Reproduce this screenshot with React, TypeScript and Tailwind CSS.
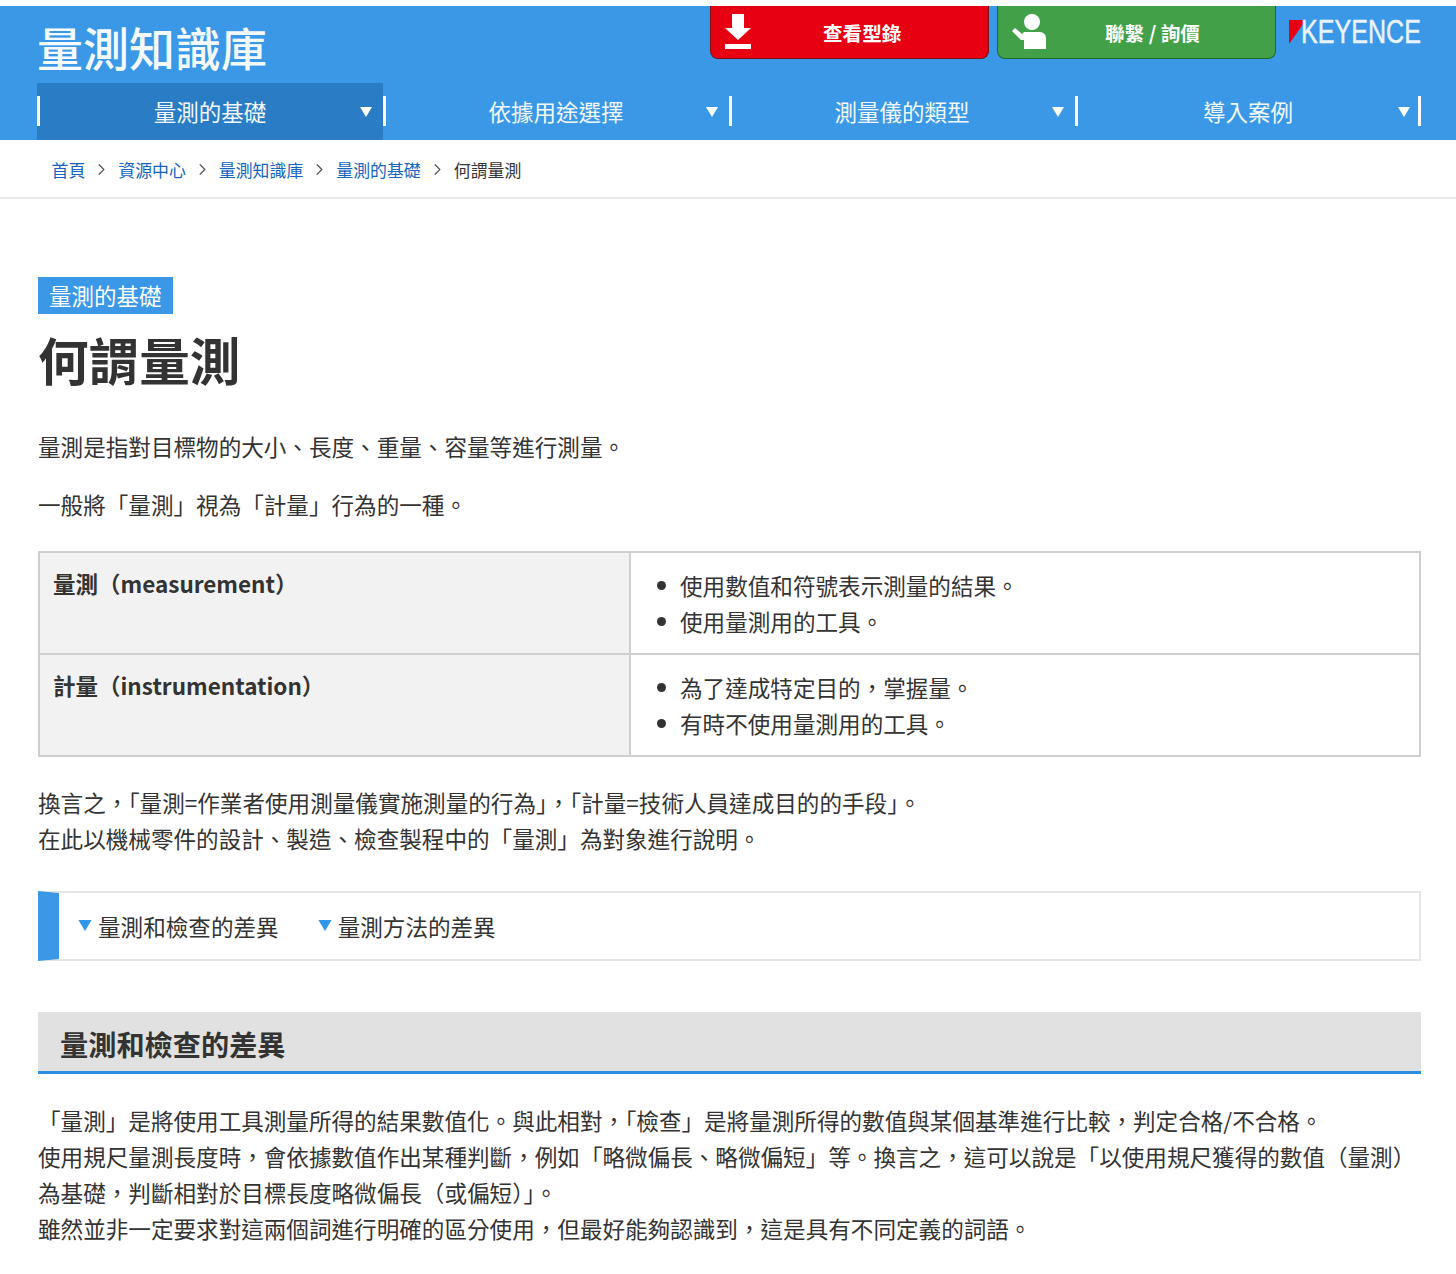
import { ChevronRight } from "lucide-react";

const cjk = "font-['Noto_Sans_CJK_TC','Noto_Sans_CJK_SC',sans-serif]";

const navItems = ["量測的基礎", "依據用途選擇", "測量儀的類型", "導入案例"];
const crumbs = ["首頁", "資源中心", "量測知識庫", "量測的基礎"];

const Tri = ({ className }: { className: string }) => (
  <svg viewBox="0 0 12 10" className={className} fill="currentColor">
    <path d="M0 0h12L6 10z" />
  </svg>
);

const TableRow = ({ title, items, last }: { title: string; items: string[]; last?: boolean }) => (
  <div className={`flex ${last ? "h-[100px]" : "h-[102px] border-b-2 border-[#cfcfcf]"}`}>
    <div className="w-[591px] shrink-0 border-r-2 border-[#cfcfcf] bg-[#f2f2f2] pl-[13px] pt-[12px] text-[22.5px] leading-[36px] font-bold text-[#333]">
      {title}
    </div>
    <ul className="pl-[26px] pt-[14.5px]">
      {items.map((item) => (
        <li key={item} className="flex h-[36px] items-center text-[22.58px] leading-[36px]">
          <span className="mr-[14px] h-[9px] w-[9px] rounded-full bg-[#333]" />
          {item}
        </li>
      ))}
    </ul>
  </div>
);

export default function App() {
  return (
    <div className={`min-h-[1274px] bg-white text-[#333] ${cjk}`}>
      <div className="h-[6px] bg-white" />
      <header className="h-[134px] bg-[#3a98e6] pl-[37px] pr-[35px]">
        <div className="flex h-[77px] items-start">
          <div className="mt-[13px] text-[46px] leading-[54px] font-medium text-[#f4f9fd]">量測知識庫</div>
          <div className="ml-auto flex items-start">
            <a className="flex h-[53px] w-[279px] items-center rounded-b-lg border border-t-0 border-[#7a0f16] bg-[#e60012] pl-[13px] text-white">
              <svg viewBox="0 0 28 36" className="h-[36px] w-[28px]" fill="white">
                <path d="M8 0h12v14h7L14 26 1 14h7z" />
                <rect x="1" y="30" width="26" height="5" />
              </svg>
              <span className="ml-[71px] pt-[1px] text-[19.6px] font-bold">查看型錄</span>
            </a>
            <a className="ml-[8px] flex h-[53px] w-[279px] items-center rounded-b-lg border border-t-0 border-[#1f6b28] bg-[#42a048] pl-[12px] text-white">
              <svg viewBox="0 0 36 36" className="h-[36px] w-[36px]" fill="white">
                <circle cx="22" cy="8" r="8" />
                <path d="M14 18h16a6 6 0 0 1 6 6v11H14v-9h-3L2 17l3-3 7 6z" />
              </svg>
              <span className="ml-[59px] pt-[1px] text-[19.6px] font-bold">聯繫 / 詢價</span>
            </a>
            <div className="ml-[13px] mt-[14px] flex w-[132px] items-center">
              <svg viewBox="0 0 17 24" className="h-[24px] w-[17px] shrink-0">
                <path d="M0 0h17L0 24z" fill="#e60012" />
              </svg>
              <span className="ml-[-5px] origin-left scale-x-[0.76] font-['Liberation_Sans',sans-serif] text-[33px] leading-[24px] whitespace-nowrap text-[#e8f3fc] [-webkit-text-stroke:0.5px_#e8f3fc]">
                KEYENCE
              </span>
            </div>
          </div>
        </div>
        <nav className="flex h-[57px]">
          {navItems.map((item, i) => (
            <div
              key={item}
              className={`relative grid w-[346.3px] grid-cols-[1fr_auto_1fr] items-center ${i === 0 ? "bg-[#2a7cc5]" : ""}`}
            >
              <span className="absolute left-0 top-[13px] h-[30px] w-[3px] bg-white" />
              <span />
              <span className="text-[22.5px] leading-[57px] text-[#f2f8fd]">{item}</span>
              <Tri className="mr-[11px] h-[10px] w-[12px] justify-self-end text-white" />
              {i === navItems.length - 1 && <span className="absolute right-0 top-[13px] h-[30px] w-[3px] bg-white" />}
            </div>
          ))}
        </nav>
      </header>

      <div className="flex h-[59px] items-center border-b-2 border-[#e6e6e6] pl-[51.5px] pt-[2px] text-[16.9px]">
        {crumbs.map((c) => (
          <span key={c} className="flex items-center">
            <a className="text-[#1565c0]">{c}</a>
            <ChevronRight className="mx-[7px] h-[19px] w-[19px] text-[#555]" strokeWidth={1.5} />
          </span>
        ))}
        <span className="text-[#333]">何謂量測</span>
      </div>

      <main className="pl-[38px] pr-[35px] pt-[78px]">
        <div className="inline-block h-[37px] bg-[#3a98e6] px-[11px] text-[22.5px] leading-[37px] text-white">量測的基礎</div>
        <h1 className="mt-[5px] text-[50.6px] leading-[80px] font-bold text-[#333]">何謂量測</h1>
        <p className="mt-[30px] text-[22.58px] leading-[36px]">量測是指對目標物的大小、長度、重量、容量等進行測量。</p>
        <p className="mt-[22px] text-[22.58px] leading-[36px]">一般將「量測」視為「計量」行為的一種。</p>

        <div className="mt-[28px] border-2 border-[#cfcfcf]">
          <TableRow title="量測（measurement）" items={["使用數值和符號表示測量的結果。", "使用量測用的工具。"]} />
          <TableRow title="計量（instrumentation）" items={["為了達成特定目的，掌握量。", "有時不使用量測用的工具。"]} last />
        </div>

        <p className="mt-[28px] text-[22.58px] leading-[36px]">
          換言之，「量測=作業者使用測量儀實施測量的行為」，「計量=技術人員達成目的的手段」。
          <br />
          在此以機械零件的設計、製造、檢查製程中的「量測」為對象進行說明。
        </p>

        <div className="mt-[34px] flex h-[70px] items-center border-2 border-l-[21px] border-[#e6e6e6] border-l-[#3a98e6] pl-[19px] pt-[2px] text-[22.58px]">
          <span className="flex items-center">
            <Tri className="mb-[2px] mr-[6px] h-[11px] w-[14px] text-[#2f96e8]" />
            量測和檢查的差異
          </span>
          <span className="ml-[39px] flex items-center">
            <Tri className="mb-[2px] mr-[6px] h-[11px] w-[14px] text-[#2f96e8]" />
            量測方法的差異
          </span>
        </div>

        <h2 className="mt-[51px] h-[62px] border-b-[3px] border-[#2a8fe0] bg-[#e1e1e1] pl-[22px] text-[28.2px] leading-[64px] font-bold">量測和檢查的差異</h2>

        <p className="mt-[29px] text-[22.58px] leading-[36px]">
          「量測」是將使用工具測量所得的結果數值化。與此相對，「檢查」是將量測所得的數值與某個基準進行比較，判定合格/不合格。
          <br />
          使用規尺量測長度時，會依據數值作出某種判斷，例如「略微偏長、略微偏短」等。換言之，這可以說是「以使用規尺獲得的數值（量測）為基礎，判斷相對於目標長度略微偏長（或偏短）」。
          <br />
          雖然並非一定要求對這兩個詞進行明確的區分使用，但最好能夠認識到，這是具有不同定義的詞語。
        </p>
      </main>
    </div>
  );
}
